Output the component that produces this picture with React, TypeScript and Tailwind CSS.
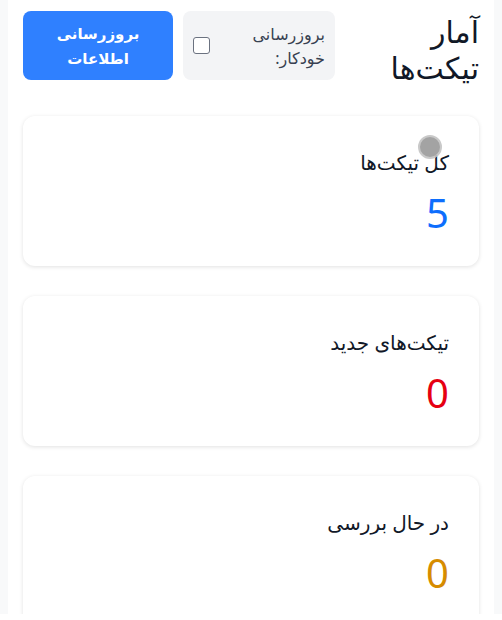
import React from "react";

const cards = [
  { title: "کل تیکت‌ها", value: "5", color: "text-[#0d6efd]" },
  { title: "تیکت‌های جدید", value: "0", color: "text-[#e60012]" },
  { title: "در حال بررسی", value: "0", color: "text-[#d68c00]" },
];

export default function App() {
  return (
    <div
      className="h-[614px] overflow-hidden bg-[#f8f9fa] px-2"
      style={{ fontFamily: '"Noto Sans", "DejaVu Sans", sans-serif' }}
    >
      <div dir="rtl" className="relative h-full bg-white px-[15px] pt-[11px]">
        <div className="flex h-[69px] items-start justify-between">
          <h1 className="w-[100px] pt-[3px] text-[30px] leading-[36px] font-normal text-[#111827]">
            آمار تیکت‌ها
          </h1>
          <div className="flex gap-[10px]">
            <label className="flex h-[69px] w-[152px] items-center justify-between rounded-lg bg-[#f3f4f6] px-[10px]">
              <span className="text-[16px] leading-[24px] text-[#374151]">
                بروزرسانی
                <br />
                خودکار:
              </span>
              <span className="h-[17px] w-[17px] rounded-[3px] border-[1.5px] border-[#6b7280] bg-white" />
            </label>
            <button className="h-[69px] w-[150px] rounded-lg bg-[#2f80ff] text-[15px] leading-[25px] font-bold text-white">
              بروزرسانی
              <br />
              اطلاعات
            </button>
          </div>
        </div>
        <div className="mt-[36px] flex flex-col gap-[30px]">
          {cards.map((c) => (
            <div
              key={c.title}
              className="h-[150px] shrink-0 rounded-xl bg-white px-[30px] pt-[33px] shadow-[0_1px_4px_rgba(0,0,0,0.12)]"
            >
              <div className="text-[20px] leading-[28px] text-[#111827]">{c.title}</div>
              <div className={`mt-[12px] text-[40px] leading-[48px] ${c.color}`}>{c.value}</div>
            </div>
          ))}
        </div>
        <div className="absolute left-[410px] top-[135px] h-[24px] w-[24px] rounded-full border-[2px] border-[#c4c4c4] bg-[#9a9a9a] opacity-90" />
      </div>
    </div>
  );
}
